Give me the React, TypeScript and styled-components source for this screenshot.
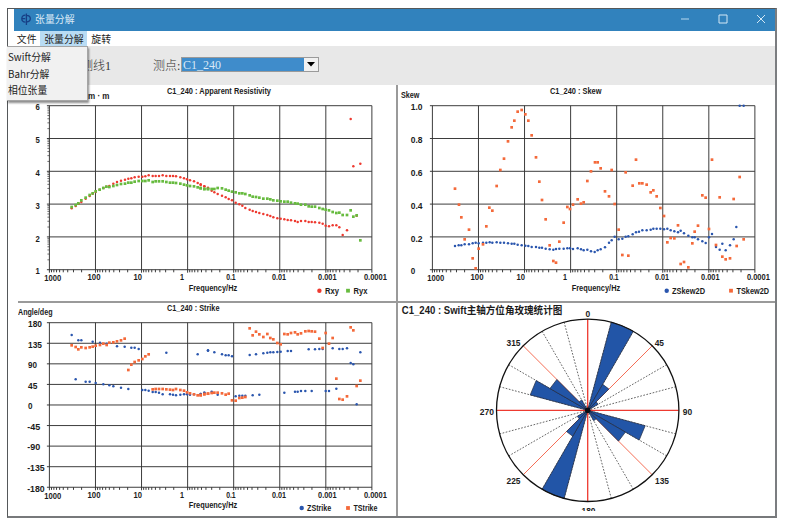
import React from "react";
import styled, { createGlobalStyle } from "styled-components";

const GlobalStyle = createGlobalStyle`
  * { box-sizing: border-box; }
  body { margin: 0; background: #fff; overflow: hidden; }
`;

const ui = `"Noto Sans CJK SC", sans-serif`;
const BLUE = "#2a56ae";
const ORANGE = "#f4693a";
const RED = "#ee3a30";
const GREEN = "#67bb3f";

const Page = styled.div`
  width: 786px;
  height: 522px;
  padding: 8px 0 0 7px;
`;
const Window = styled.div`
  position: relative;
  width: 770px;
  height: 510px;
  display: flex;
  flex-direction: column;
  border: solid #55585a;
  border-width: 1px 2px 2px 1px;
  border-right-color: #7b7d80;
  border-bottom-color: #77797b;
  font-family: ${ui};
`;
const TitleBar = styled.header`
  flex: 0 0 22px;
  min-height: 0;
  margin-left: 6px;
  padding: 0 9px 2px 7px;
  display: flex;
  align-items: center;
  background: #3182bd;
  color: #dcebf7;
  font-size: 9.9px;
`;
const AppName = styled.span`
  flex: 1;
  margin-left: 4px;
  line-height: 20px;
`;
const WindowButtons = styled.div`
  display: flex;
  gap: 28px;
`;
const MenuBar = styled.nav`
  flex: 0 0 15px;
  min-height: 0;
  display: flex;
  padding-left: 5px;
  background: #fff;
`;
const MenuItem = styled.span<{ $open?: boolean }>`
  height: 15px;
  padding: 0 3.8px;
  line-height: 16px;
  font-size: 9.9px;
  color: #222;
  white-space: nowrap;
  background: ${(p) => (p.$open ? "#b9dcf4" : "transparent")};
`;
const Toolbar = styled.div`
  flex: 0 0 39px;
  display: flex;
  align-items: center;
  padding-left: 73px;
  background: #e8e8e8;
  color: #333;
  font-family: "Liberation Serif", "Noto Sans CJK SC", serif;
  font-size: 12px;
  font-weight: 300;
  white-space: nowrap;
`;
const FieldLabel = styled.span<{ $width: number }>`
  width: ${(p) => p.$width}px;
  padding-top: 1px;
  line-height: 16px;
`;
const Select = styled.div`
  display: flex;
  width: 138px;
  height: 15px;
  margin-top: -3px;
  border: 1px solid #9a9a9a;
  background: #3f8ccb;
`;
const SelectValue = styled.span`
  flex: 1;
  padding-left: 1px;
  line-height: 14px;
  color: #d9e9f6;
  font-weight: 400;
`;
const SelectArrow = styled.span`
  display: flex;
  align-items: center;
  justify-content: center;
  width: 14px;
  background: #f1f1f1;
`;
const Dropdown = styled.div`
  position: absolute;
  left: -1px;
  top: 37px;
  width: 81px;
  height: 55px;
  padding: 3px 0 0 1px;
  background: #f1f1f1;
  border: 1px solid #a5a5a5;
  border-width: 1px 1px 1px 0;
  box-shadow: 1px 2px 2px rgba(0, 0, 0, 0.45);
`;
const DropdownItem = styled.div`
  height: 16.7px;
  line-height: 15px;
  font-size: 9.8px;
  color: #222;
`;
const Panels = styled.main`
  flex: 1;
  display: grid;
  grid-template-columns: 388px 1fr;
  grid-template-rows: 216px 1fr;
  min-height: 0;
  background: #fff;
`;
const Panel = styled.section<{ $right?: boolean; $bottom?: boolean }>`
  border-left: ${(p) => (p.$right ? "2px solid #9a9a9a" : "0")};
  border-top: ${(p) => (p.$bottom ? "2px solid #9a9a9a" : "0")};
  margin-left: ${(p) => (p.$bottom && !p.$right ? 10 : 0)}px;
  overflow: hidden;
`;
const Drawing = styled.svg`
  display: block;
  width: 100%;
  height: 100%;
  font-family: "Liberation Sans", "Noto Sans CJK SC", sans-serif;
  font-weight: 700;
  fill: #1c1c1c;
`;

type Point = [number, number];
type Shape = "dot" | "square";

const trace = (ox: number, oy: number, s: string): Point[] =>
  s.split(" ").map((p) => {
    const [x, y] = p.split(",").map(Number);
    return [ox + x / 3, oy + y / 3];
  });

const rxy = [
  ...trace(10, 80, "185,385 197,378 206,371 214,366 227,356 239,348 248,341 257,336 269,329 280,324 289,320 298,318 310,311 321,306 333,302 345,299 355,296 364,295 374,292 386,290 397,290 406,289 416,286 428,288 437,288 447,288 458,286 469,288 480,288 489,288 498,289 511,292 522,295 531,298 540,301 552,304 563,309 572,313 583,319 594,323"),
  ...trace(200, 80, "2,315 13,319 24,325 35,332 43,337 53,342 66,347 77,352 86,357 96,361 107,368 118,373 127,377 136,384 149,389 158,393 168,396 178,399 190,402 202,405 211,408 220,412 232,415 242,416 253,418 263,420 273,421 285,423 293,426 303,423 316,423 326,426 335,426 345,427 358,428 368,431 377,437 387,439 398,436 409,436 418,442 428,465 441,451 452,117 460,259 470,407 481,251"),
];
const ryx = [
  ...trace(10, 80, "185,381 197,375 205,370 214,361 227,353 239,345 248,340 257,334 269,329 280,324 289,320 298,321 310,318 321,315 333,312 345,311 355,308 364,308 374,305 386,303 397,303 406,303 416,301 428,306 437,304 447,304 458,304 469,306 480,308 489,308 498,309 511,311 522,314 531,316 540,318 552,319 563,322 572,324 583,327 594,327"),
  ...trace(200, 80, "2,325 13,327 24,327 35,327 43,327 53,324 66,325 77,329 86,332 96,335 107,337 118,340 127,340 136,342 149,346 158,350 168,351 178,353 190,356 202,356 211,358 220,361 232,362 242,364 253,365 263,365 273,368 285,370 293,371 303,374 316,374 326,379 335,380 345,380 358,384 368,387 377,389 387,391 398,396 409,399 418,398 428,405 441,405 452,391 460,410 470,406 481,481"),
];
const zSkew = [
  ...trace(395, 80, "180,498 191,496 199,496 209,493 222,493 233,490 242,488 251,490 264,488 274,488 284,487 292,488 305,487 316,488 327,488 339,490 350,491 358,491 368,494 380,496 391,497 400,498 410,501 423,501 433,503 441,503 452,506 464,508 475,509 483,507 493,506 506,506 517,505 525,505 534,507 548,505 558,508 566,511"),
  ...trace(586, 80, "4,509 15,514 26,516 35,511 44,508 57,502 69,488 77,481 86,470 98,478 109,476 119,470 127,469 140,463 150,457 159,455 169,451 182,451 194,449 202,446 212,446 223,446 234,448 244,446 254,451 265,454 276,457 284,452 294,460 307,467 319,472 326,472 336,478 349,484 359,489 369,472 378,462 390,501 401,509 409,491 419,511 432,496 443,478 451,441 461,77 473,77"),
];
const tSkew = [
  ...trace(395, 80, "180,326 192,374 199,412 209,478 222,449 233,535 242,565 251,506 264,493 274,439 283,383 292,392 305,318 316,270 327,236 339,184 350,142 358,122 368,95 380,90 391,103 400,122 410,166 423,232 433,305 441,360 452,418 464,496 475,543 483,548 493,485 506,428 517,381 525,387 534,374 548,358 558,371 566,367"),
  ...trace(586, 80, "4,303 15,274 27,247 35,247 44,265 57,334 69,349 77,270 86,372 98,449 109,525 119,277 127,527 140,317 150,239 160,310 169,310 182,314 194,337 202,331 212,349 223,384 234,408 244,487 254,474 265,475 276,436 284,552 294,546 307,562 319,490 326,455 336,437 349,346 359,353 369,447 378,239 390,495 401,352 409,530 419,538 432,535 443,357 452,498 461,291 473,478"),
];
const zStrike = [
  ...trace(10, 295, "185,120 205,136 214,136 248,140 270,143 290,146 321,154 344,155 364,158 374,158 386,162 197,253 227,260 239,260 257,264 280,268 298,271 310,274 333,278 355,282 397,285 406,285 416,287 428,291 437,291 447,293 458,298 469,173 480,298 489,299 498,301 511,299 522,298 531,298 540,299 563,178 552,298 572,297 583,293 594,167"),
  ...trace(200, 295, "2,297 13,293 24,166 35,290 43,172 53,299 66,178 77,181 86,181 96,184 107,304 118,302 127,302 136,302 149,180 158,301 168,178 178,299 190,175 202,173 211,172 220,172 232,171 242,170 253,293 263,168 273,168 285,290 293,290 303,288 316,288 326,163 335,288 345,163 358,162 368,162 377,288 387,288 398,160 409,281 418,162 428,162 441,160 452,204 460,208 470,328 481,172"),
];
const tStrike = [
  ...trace(10, 295, "185,151 197,156 205,163 214,157 227,159 239,157 248,155 257,152 270,150 280,146 290,150 298,143 310,142 321,139 333,136 344,131 355,225 364,209 374,201 386,196 397,192 406,184 416,178 428,283 437,282 447,282 458,282 469,283 480,284 489,285 498,282 511,285 522,287 531,292 540,295 552,298 563,301 572,301 583,297 594,296"),
  ...trace(200, 295, "2,300 13,298 24,296 35,294 43,293 53,293 66,295 77,299 86,296 96,316 107,317 118,309 127,308 136,306 149,100 158,121 168,110 178,118 190,126 202,117 211,129 220,133 232,144 242,148 253,117 263,118 273,114 285,112 293,118 303,115 316,109 326,108 335,109 345,110 358,131 368,159 377,114 387,146 398,129 409,251 418,312 428,314 441,304 452,97 460,106 470,273 481,257"),
];

/* One line of text, vertically centred on cy and fitted to the width w. */
const Label = ({ x, cy, w, size = 8.5, children }: { x: number; cy: number; w: number; size?: number; children: string }) => (
  <text x={x} y={cy + size * 0.36} fontSize={size} textLength={w} lengthAdjust="spacingAndGlyphs">
    {children}
  </text>
);

const Marker = ({ at: [x, y], shape, color, r }: { at: Point; shape: Shape; color: string; r: number }) =>
  shape === "dot" ? (
    <circle cx={x} cy={y} r={r} fill={color} />
  ) : (
    <rect x={x - r} y={y - r} width={r * 2} height={r * 2} fill={color} />
  );

type TextSpec = [string, number, number, number];
interface Series {
  name: string;
  color: string;
  shape: Shape;
  points: Point[];
  keyX: number;
  textX: number;
  textW: number;
}
interface ChartProps {
  viewBox: string;
  left: number;
  top: number;
  rows: number;
  rowHeight: number;
  minorRows?: boolean;
  texts: TextSpec[];
  yLabels: [string, number, number][];
  yLabelShift: number;
  yLabelSize: number;
  legendY: number;
  series: Series[];
}

const DECADES: [string, number, number][] = [
  ["1000", -5.2, 17],
  ["100", -8, 13],
  ["10", -8, 8.5],
  ["1", -7.5, 4],
  ["0.1", -7.5, 9.5],
  ["0.01", -7.8, 14],
  ["0.001", -7.8, 18.5],
  ["0.0001", -8, 23],
];
const STEP = 46.07;

const Chart = (p: ChartProps) => {
  const width = STEP * 7;
  const bottom = p.top + p.rows * p.rowHeight;
  const fine = [2, 3, 4, 5, 6, 7, 8, 9].map((k) => 1 - Math.log10(k));
  return (
    <Drawing viewBox={p.viewBox} preserveAspectRatio="xMinYMin meet">
      <g stroke="#333" strokeWidth="0.95">
        {DECADES.map(([t], i) => {
          const x = p.left + i * STEP;
          return <line key={t} x1={x} x2={x} y1={p.top} y2={bottom + 3} />;
        })}
        {Array.from({ length: p.rows + 1 }, (_, i) => {
          const y = p.top + i * p.rowHeight;
          return <line key={i} x1={p.left - 2.5} x2={p.left + width} y1={y} y2={y} />;
        })}
        {DECADES.slice(1).flatMap(([t], i) =>
          fine.map((f) => {
            const x = p.left + (i + 1 - (1 - f)) * STEP;
            return <line key={t + f} x1={x} x2={x} y1={bottom} y2={bottom + 2.6} />;
          })
        )}
        {p.minorRows &&
          Array.from({ length: p.rows }, (_, i) =>
            fine.map((f) => {
              const y = p.top + (i + f) * p.rowHeight;
              return <line key={i + "-" + f} x1={p.left - 2} x2={p.left} y1={y} y2={y} strokeWidth="0.7" />;
            })
          )}
      </g>
      {p.series.map((s) => (
        <g key={s.name}>
          {s.points.map((pt, i) => (
            <Marker key={i} at={pt} shape={s.shape} color={s.color} r={s.shape === "dot" ? 1.25 : 1.35} />
          ))}
          <Marker at={[s.keyX, p.legendY]} shape={s.shape} color={s.color} r={s.shape === "dot" ? 2.2 : 1.9} />
          <Label x={s.textX} cy={p.legendY + 0.2} w={s.textW} size={9}>{s.name}</Label>
        </g>
      ))}
      {p.texts.map(([t, x, cy, w]) => (
        <Label key={t} x={x} cy={cy} w={w} size={9}>{t}</Label>
      ))}
      {p.yLabels.map(([t, x, w], i) => (
        <Label key={t} x={x} cy={p.top + i * p.rowHeight + p.yLabelShift} w={w} size={p.yLabelSize}>{t}</Label>
      ))}
      {DECADES.map(([t, dx, w], i) => (
        <Label key={t} x={p.left + i * STEP + dx} cy={bottom + (i ? 7.2 : 8.4)} w={w} size={8.7}>{t}</Label>
      ))}
    </Drawing>
  );
};

const CX = 587.7;
const CY = 410.3;
const R = 91.2;
const polar = (deg: number, r: number): Point => [
  CX + r * Math.sin((deg * Math.PI) / 180),
  CY - r * Math.cos((deg * Math.PI) / 180),
];
const PETALS: Point[] = [
  [15, R],
  [30, 30],
  [45, 12],
  [105, 59.5],
  [120, 43.6],
  [135, 12],
];
const BEARINGS: TextSpec[] = [
  ["0", 585.5, 313.4, 4.7],
  ["45", 654.7, 342.6, 9.3],
  ["90", 682.8, 411.5, 9.4],
  ["135", 655, 480.7, 14],
  ["180", 581.5, 510.3, 14],
  ["225", 506.5, 480.7, 14],
  ["270", 479.8, 411.5, 14.2],
  ["315", 506.5, 342.6, 14],
];

const Rose = () => (
  <Drawing viewBox="398 303 377 213" preserveAspectRatio="xMinYMin meet">
    {Array.from({ length: 24 }, (_, i) => i * 15).map((a) => {
      const [x, y] = polar(a, R);
      if (a % 90 === 0) return null;
      return a % 45 === 0 ? (
        <line key={a} x1={CX} y1={CY} x2={x} y2={y} stroke="#f4664c" strokeWidth="0.95" />
      ) : (
        <line key={a} x1={CX} y1={CY} x2={x} y2={y} stroke="#333" strokeWidth="0.75" strokeDasharray="1.7 1.5" />
      );
    })}
    <path d={`M${CX} ${CY - R}V${CY + R}M${CX - R} ${CY}H${CX + R}`} stroke="#ee3a30" strokeWidth="1.3" />
    {[0, 180].flatMap((turn) =>
      PETALS.map(([a, r]) => {
        const p = polar(a + turn, r);
        const q = polar(a + turn + 15, r);
        const edge = r === R ? `A${R} ${R} 0 0 1 ${q}` : `L${q}`;
        return <path key={a + turn} d={`M${CX} ${CY}L${p}${edge}Z`} fill="#2255a7" stroke="#222b40" strokeWidth="0.7" />;
      })
    )}
    <circle cx={CX} cy={CY} r={R} fill="none" stroke="#111" strokeWidth="1.3" />
    <circle cx={CX} cy={CY} r="2.8" fill="#0b0b12" />
    <Label x={401.8} cy={310.2} w={160.5} size={10}>C1_240 : Swift主轴方位角玫瑰统计图</Label>
    {BEARINGS.map(([t, x, cy, w]) => (
      <Label key={t} x={x} cy={cy} w={w} size={9.6}>{t}</Label>
    ))}
    <rect x="575" y="511" width="30" height="5" fill="#fff" />
  </Drawing>
);

const s = (name: string, color: string, shape: Shape, points: Point[], keyX: number, textX: number, textW: number): Series => ({
  name, color, shape, points, keyX, textX, textW,
});

export default function App() {
  return (
    <Page>
      <GlobalStyle />
      <Window>
        <TitleBar>
          <svg width="10" height="13" viewBox="0 0 10 13" fill="none" stroke="#173f86" strokeWidth="1.3">
            <path d="M4.4 2.2C1.6 2.4.8 4 .8 5.7s1.1 3.2 3.6 3.4M1 5.6h3.2M5.4 .5v11.5M5.4 2.3c2.7 0 3.9 1.4 3.9 3.3S8 9 5.4 9" />
          </svg>
          <AppName>张量分解</AppName>
          <WindowButtons>
            <svg width="10" height="10" viewBox="0 0 10 10" stroke="#b9d8ee"><path d="M1 5h8" /></svg>
            <svg width="10" height="10" viewBox="0 0 10 10" stroke="#d3e7f5" fill="none"><path d="M1 1h8v8H1z" /></svg>
            <svg width="10" height="10" viewBox="0 0 10 10" stroke="#d3e7f5"><path d="M1 1l8 8M9 1L1 9" /></svg>
          </WindowButtons>
        </TitleBar>
        <MenuBar>
          <MenuItem>文件</MenuItem>
          <MenuItem $open>张量分解</MenuItem>
          <MenuItem>旋转</MenuItem>
        </MenuBar>
        <Toolbar>
          <FieldLabel $width={72}>测线1</FieldLabel>
          <FieldLabel $width={28}>测点:</FieldLabel>
          <Select>
            <SelectValue>C1_240</SelectValue>
            <SelectArrow>
              <svg width="8" height="5" viewBox="0 0 8 5"><path d="M0 0h8L4 4.5z" fill="#000" /></svg>
            </SelectArrow>
          </Select>
        </Toolbar>
        <Panels>
          <Panel>
            <Chart
              viewBox="8 85 388 216"
              left={49.4} top={105.7} rows={5} rowHeight={32.8} minorRows
              texts={[["m · m", 88, 95.3, 21.5], ["C1_240 : Apparent Resistivity", 167, 91, 104], ["Frequency/Hz", 188.7, 287.7, 48.5]]}
              yLabels={["6", "5", "4", "3", "2", "1"].map((t) => [t, 35.6, 4.3])}
              yLabelShift={1.7}
              yLabelSize={8.6}
              legendY={290.7}
              series={[s("Rxy", RED, "dot", rxy, 319.4, 325, 14), s("Ryx", GREEN, "square", ryx, 348, 353.5, 14)]}
            />
          </Panel>
          <Panel $right>
            <Chart
              viewBox="398 85 377 216"
              left={432.4} top={105.7} rows={5} rowHeight={32.8}
              texts={[["Skew", 401, 95.2, 18.5], ["C1_240 : Skew", 550, 90.8, 51.5], ["Frequency/Hz", 571.7, 287.7, 48.5]]}
              yLabels={["1.0", "0.8", "0.6", "0.4", "0.2", "0"].map((t) => [t, 410.8, t === "0" ? 4.5 : 11.8])}
              yLabelShift={1.2}
              yLabelSize={9.6}
              legendY={290.7}
              series={[s("ZSkew2D", BLUE, "dot", zSkew, 666.7, 672, 33), s("TSkew2D", ORANGE, "square", tSkew, 731, 736.5, 32.5)]}
            />
          </Panel>
          <Panel $bottom>
            <Chart
              viewBox="18 303 378 213"
              left={49.4} top={322.7} rows={8} rowHeight={20.57}
              texts={[["Angle/deg", 18, 312, 34.5], ["C1_240 : Strike", 167, 307.6, 52.5], ["Frequency/Hz", 188.7, 505.2, 48.5]]}
              yLabels={[["180", 28, 14], ["135", 28, 14], ["90", 28, 9], ["45", 28, 9.3], ["0", 28, 4.5], ["-45", 27.2, 13], ["-90", 27.2, 13], ["-135", 27.2, 17.5], ["-180", 27.2, 17.5]]}
              yLabelShift={0.9}
              yLabelSize={9.3}
              legendY={508}
              series={[s("ZStrike", BLUE, "dot", zStrike, 301.7, 307, 24.3), s("TStrike", ORANGE, "square", tStrike, 348, 353.5, 24)]}
            />
          </Panel>
          <Panel $right $bottom>
            <Rose />
          </Panel>
        </Panels>
        <Dropdown>
          <DropdownItem>Swift分解</DropdownItem>
          <DropdownItem>Bahr分解</DropdownItem>
          <DropdownItem>相位张量</DropdownItem>
        </Dropdown>
      </Window>
    </Page>
  );
}
